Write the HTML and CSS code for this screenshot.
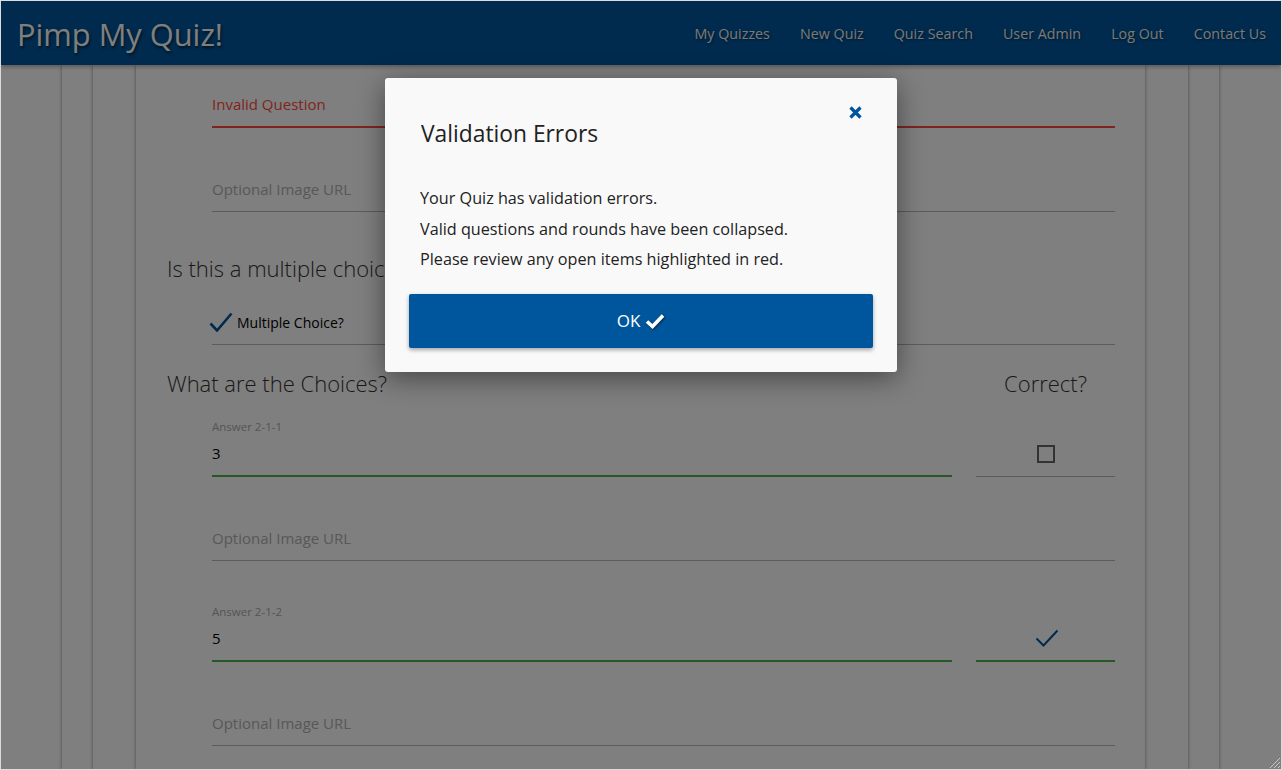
FILE: index.html
```html
<!DOCTYPE html>
<html lang="en">
<head>
<meta charset="utf-8">
<title>Pimp My Quiz!</title>
<link rel="stylesheet" href="styles.css">
</head>
<body>
<div class="window">
  <header class="navbar">
    <div class="brand">Pimp My Quiz!</div>
    <nav class="nav-links">
      <a href="#">My Quizzes</a>
      <a href="#">New Quiz</a>
      <a href="#">Quiz Search</a>
      <a href="#">User Admin</a>
      <a href="#">Log Out</a>
      <a href="#">Contact Us</a>
    </nav>
  </header>

  <main class="page">
    <div class="card card-outer">
      <div class="card card-middle">
        <div class="card card-inner">
          <div class="field field-first">
            <div class="input invalid"><span class="placeholder">Invalid Question</span></div>
          </div>
          <div class="field field-plain">
            <div class="input"><span class="placeholder muted">Optional Image URL</span></div>
          </div>

          <h3 class="section-title title-mc">Is this a multiple choice?</h3>
          <div class="field field-check">
            <div class="input">
              <svg class="mc-check" viewBox="0 0 24 20" width="24" height="20"><path d="M1.5 11.5 L8 18.5 L22.5 1.5" fill="none" stroke="#00569c" stroke-width="2.6"/></svg>
              <span class="check-label">Multiple Choice?</span>
            </div>
          </div>

          <div class="section-row">
            <h3 class="section-title">What are the Choices?</h3>
            <h3 class="section-title correct-title">Correct?</h3>
          </div>

          <div class="answer-row answer-first">
            <div class="field">
              <label class="float-label">Answer 2-1-1</label>
              <div class="input valid"><span class="value">3</span></div>
            </div>
            <div class="field correct">
              <div class="input centered"><span class="box"></span></div>
            </div>
          </div>
          <div class="field field-plain">
            <div class="input"><span class="placeholder muted">Optional Image URL</span></div>
          </div>

          <div class="answer-row answer-next">
            <div class="field">
              <label class="float-label">Answer 2-1-2</label>
              <div class="input valid"><span class="value">5</span></div>
            </div>
            <div class="field correct">
              <div class="input centered valid">
                <svg class="tick" viewBox="0 0 24 18" width="24" height="18"><path d="M1.5 9.5 L8.5 16.5 L22.5 1.5" fill="none" stroke="#00569c" stroke-width="2"/></svg>
              </div>
            </div>
          </div>
          <div class="field field-plain">
            <div class="input"><span class="placeholder muted">Optional Image URL</span></div>
          </div>
        </div>
      </div>
    </div>
  </main>

  <div class="backdrop"></div>

  <div class="modal-wrap">
    <div class="modal" role="dialog">
      <div class="modal-header">
        <h2 class="modal-title">Validation Errors</h2>
        <button class="close" aria-label="Close">
          <svg viewBox="0 0 13 13" width="13" height="13"><path d="M1.5 1.5 L11.5 11.5 M11.5 1.5 L1.5 11.5" stroke="#00569c" stroke-width="3.2" stroke-linecap="butt"/></svg>
        </button>
      </div>
      <div class="modal-body">
        <p>Your Quiz has validation errors.</p>
        <p>Valid questions and rounds have been collapsed.</p>
        <p>Please review any open items highlighted in red.</p>
      </div>
      <button class="btn-ok">OK <svg class="ok-check" viewBox="0 0 20 16" width="20" height="16"><path d="M2 8.5 L7.5 13.5 L18 2.5" fill="none" stroke="#fff" stroke-width="3.6"/></svg></button>
    </div>
  </div>

  <svg class="grip" viewBox="0 0 12 12" width="12" height="12"><path d="M11 1 L1 11 M11 5 L5 11 M11 9 L9 11" stroke="#c8c8c8" stroke-width="1"/></svg>
</div>
</body>
</html>
```
FILE: styles.css
```css
* { box-sizing: border-box; }
html, body { margin: 0; padding: 0; }
body {
  font-family: "Open Sans", "Noto Sans", sans-serif;
  background: #ffffff;
  color: #333;
}
.window {
  position: relative;
  width: 1282px;
  height: 770px;
  border: 1px solid #dcdcdc;
  overflow: hidden;
  background: #fff;
  display: flex;
  flex-direction: column;
}

/* navbar */
.navbar {
  position: relative;
  z-index: 2;
  height: 64px;
  flex: none;
  background: #00569c;
  display: flex;
  align-items: center;
  justify-content: space-between;
  padding: 0 15px 0 16px;
  box-shadow: 0 2px 4px rgba(0,0,0,0.3);
}
.brand {
  font-size: 30.8px;
  color: #ffffff;
  text-shadow: 1px 2px 3px rgba(0,0,0,0.6);
  padding-top: 2px;
}
.nav-links {
  display: flex;
  gap: 30px;
  padding-top: 1px;
}
.nav-links a {
  color: #f2f2f2;
  text-decoration: none;
  font-size: 14.3px;
  text-shadow: 1px 1px 2px rgba(0,0,0,0.5);
}

/* page cards */
.page {
  flex: 1;
  padding: 0 62px 0 61px;
  overflow: hidden;
}
.card {
  background: #fff;
  height: 100%;
  box-shadow: -1px 0 3px rgba(0,0,0,0.22), 1px 0 3px rgba(0,0,0,0.22);
}
.card-outer { padding: 0 31px; }
.card-middle { padding: 0 43px; }
.card-inner { padding: 21px 30px 0 31px; }

.field, .answer-row { margin-left: 45px; }
.answer-row .field { margin-left: 0; }

.field-plain { margin-top: 43px; }
.field-check { margin-top: 21px; }

.input {
  height: 41px;
  display: flex;
  align-items: center;
  padding-bottom: 4px;
  border-bottom: 1px solid #b8b8b8;
  font-size: 15px;
}
.input.invalid { height: 42px; border-bottom: 2px solid #ff4a40; }
.input.valid { height: 42px; border-bottom: 2px solid #4fae52; }
.placeholder { color: #ff4a40; }
.placeholder.muted { color: #b0b0b0; }
.value { color: #000; }
.float-label {
  display: block;
  height: 17px;
  line-height: 17px;
  font-size: 11.5px;
  color: #aaa;
}

.mc-check { margin-left: -3px; margin-right: 4px; }
.check-label { font-size: 14px; color: #000; }

.section-title {
  margin: 0;
  font-size: 22px;
  font-weight: 300;
  line-height: 30px;
  color: #333;
}
.title-mc { margin-top: 41px; }
.section-row {
  margin-top: 23px;
  display: flex;
  justify-content: space-between;
}
.correct-title { width: 139px; text-align: center; }

.answer-row {
  display: grid;
  grid-template-columns: 1fr 139px;
  column-gap: 24px;
  align-items: end;
}
.answer-first { margin-top: 20px; }
.answer-next { margin-top: 42px; }
.correct .input { height: 41px; }
.correct .input.valid { height: 42px; }
.centered { justify-content: center; }
.box {
  width: 18px;
  height: 18px;
  border: 2px solid #666;
}
.tick { margin-left: 2px; }

/* modal */
.backdrop {
  position: absolute;
  inset: 0;
  background: rgba(0,0,0,0.5);
  z-index: 5;
}
.modal-wrap {
  position: absolute;
  inset: 0;
  z-index: 6;
  display: flex;
  justify-content: center;
  align-items: flex-start;
  padding-top: 77px;
}
.modal {
  width: 512px;
  background: #f9f9f9;
  border-radius: 3px;
  padding: 24px;
  box-shadow: 0 6px 28px rgba(0,0,0,0.45);
}
.modal-header {
  display: flex;
  justify-content: space-between;
  align-items: flex-start;
  padding: 0 11px 0 12px;
}
.modal-title {
  margin: 14px 0 0;
  font-size: 22.8px;
  font-weight: 400;
  line-height: 36px;
  color: #222;
}
.close {
  border: 0;
  background: none;
  padding: 0;
  margin-top: 4px;
  width: 13px;
  height: 13px;
  display: flex;
}
.modal-body {
  padding: 0 11px;
  margin-top: 31px;
}
.modal-body p {
  margin: 0;
  font-size: 16.2px;
  line-height: 30.5px;
  color: #222;
}
.btn-ok {
  margin-top: 19px;
  width: 100%;
  height: 54px;
  border: 0;
  border-radius: 2px;
  background: #00569c;
  color: #fff;
  font-family: "Open Sans", "Noto Sans", sans-serif;
  font-size: 17px;
  display: flex;
  align-items: center;
  justify-content: center;
  gap: 5px;
  box-shadow: 0 2px 4px rgba(0,0,0,0.35);
}
.ok-check { filter: drop-shadow(1px 1px 1px rgba(0,0,0,0.5)); }

.grip {
  position: absolute;
  right: 0;
  bottom: 0;
  z-index: 7;
}
```
